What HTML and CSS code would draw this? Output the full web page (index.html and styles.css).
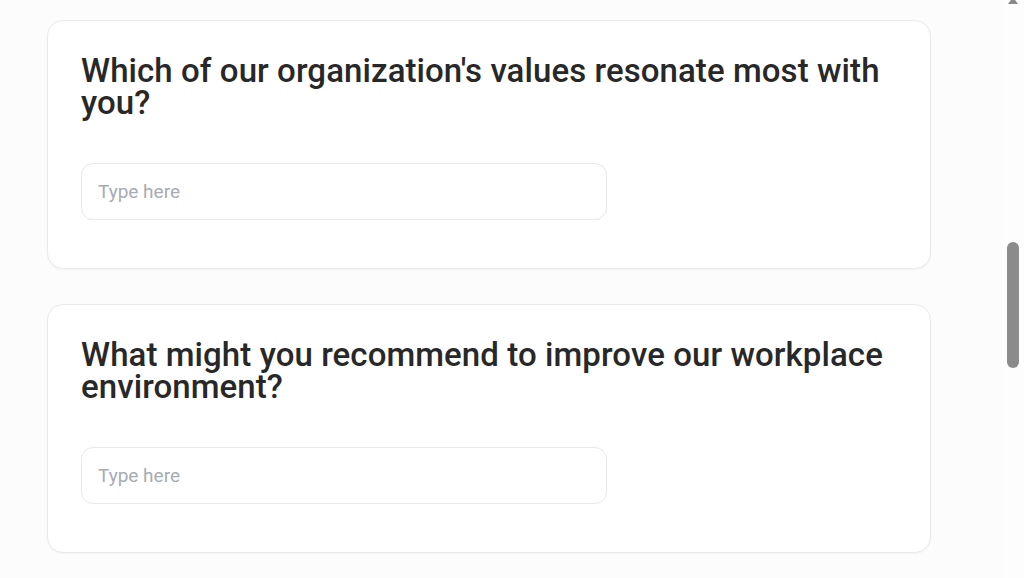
FILE: index.html
```html
<!DOCTYPE html>
<html lang="en">
<head>
<meta charset="utf-8">
<title>Survey</title>
<link rel="stylesheet" href="styles.css">
</head>
<body>
<main class="page">
  <section class="card">
    <h2 class="question">Which of our organization's values resonate most with you?</h2>
    <input class="answer" type="text" placeholder="Type here">
  </section>
  <section class="card">
    <h2 class="question">What might you recommend to improve our workplace environment?</h2>
    <input class="answer" type="text" placeholder="Type here">
  </section>
</main>
<div class="scrollbar">
  <div class="scroll-arrow"></div>
  <div class="scroll-thumb"></div>
</div>
</body>
</html>
```

FILE: styles.css
```css
html, body {
  margin: 0;
  padding: 0;
  height: 100%;
  overflow: hidden;
}
body {
  background: #fcfcfc;
  font-family: Roboto, "Noto Sans", Arial, sans-serif;
  color: #262626;
}
.page {
  display: flex;
  flex-direction: column;
  gap: 35px;
  padding: 20px 0 0 47px;
  width: 884px;
}
.card {
  box-sizing: border-box;
  width: 884px;
  height: 249px;
  background: #ffffff;
  border: 1px solid #eaeaea;
  border-radius: 16px;
  box-shadow: 0 1px 2px rgba(0, 0, 0, 0.04);
  padding: 34px 33px 0 33px;
  display: flex;
  flex-direction: column;
}
.question {
  margin: 0;
  font-size: 33px;
  font-weight: 500;
  line-height: 32px;
  color: #282828;
  letter-spacing: 0.08px;
}
.answer {
  box-sizing: border-box;
  margin-top: 44px;
  width: 526px;
  height: 57px;
  border: 1px solid #e8e8e8;
  border-radius: 12px;
  background: #ffffff;
  padding: 0 16px;
  font-family: Roboto, "Noto Sans", Arial, sans-serif;
  font-size: 19px;
  color: #262626;
  outline: none;
}
.answer::placeholder {
  color: #a7abb3;
}
.scrollbar {
  position: fixed;
  top: 0;
  right: 0;
  width: 22px;
  height: 100%;
  background: #fdfdfd;
}
.scroll-arrow {
  position: absolute;
  top: -3px;
  left: 6px;
  width: 0;
  height: 0;
  border-left: 5px solid transparent;
  border-right: 5px solid transparent;
  border-bottom: 7px solid #8a8a8a;
}
.scroll-thumb {
  position: absolute;
  top: 242px;
  left: 5px;
  width: 12px;
  height: 126px;
  border-radius: 6px;
  background: #8b8b8b;
}
```
